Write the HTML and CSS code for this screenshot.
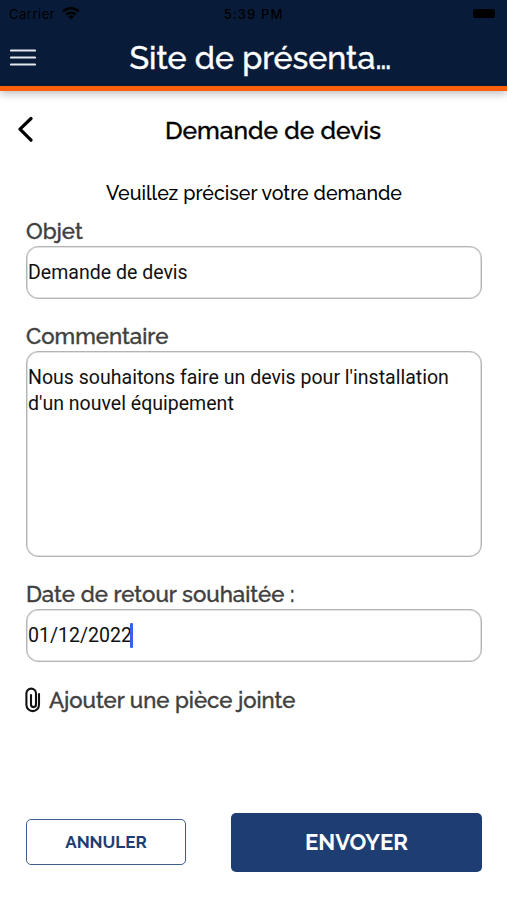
FILE: index.html
```html
<!DOCTYPE html>
<html lang="fr">
<head>
    <meta charset="UTF-8">
    <meta name="viewport" content="width=device-width, initial-scale=1.0">
    <title>Demande de devis</title>
    <link rel="stylesheet" href="styles.css">
</head>
<body>
    <header>
        <!-- Barre d'état -->
        <div class="status-bar">
            <div class="carrier">
                <span class="carrier-name">Carrier</span>
                <svg width="18" height="14" viewBox="0 0 18 14" fill="none" stroke="#000" stroke-width="2.6">
                    <path d="M1.2 5.4a11.2 11.2 0 0 1 15.6 0"/>
                    <path d="M4.2 8.6a7 7 0 0 1 9.6 0"/>
                    <path d="M9 13.2L6.2 10.5a4 4 0 0 1 5.6 0z" fill="#000" stroke="none"/>
                </svg>
            </div>
            <span class="clock">5:39 PM</span>
            <span class="battery"></span>
        </div>
        <!-- Barre de navigation -->
        <div class="nav-bar">
            <svg class="menu-icon" width="26" height="17" viewBox="0 0 26 17" stroke="#e4e8ee" stroke-width="2.2" stroke-linecap="round">
                <path d="M1 1.5h24M1 8.5h24M1 15.5h24"/>
            </svg>
            <h1>Site de présenta…</h1>
        </div>
    </header>
    <main>
        <div class="page-title">
            <svg width="18" height="28" viewBox="0 0 18 28" fill="none" stroke="#000" stroke-width="3.2" stroke-linecap="round" stroke-linejoin="round">
                <path d="M16 2.5L5 13.2l11 11"/>
            </svg>
            <h2>Demande de devis</h2>
        </div>
        <form>
            <p class="intro">Veuillez préciser votre demande</p>

            <label class="label-objet" for="objet">Objet</label>
            <input class="field" type="text" id="objet" value="Demande de devis">

            <label class="label-commentaire" for="commentaire">Commentaire</label>
            <textarea class="field" id="commentaire" spellcheck="false">Nous souhaitons faire un devis pour l'installation d'un nouvel équipement</textarea>

            <label class="label-date">Date de retour souhaitée :</label>
            <div class="field date-field">01/12/2022<span class="caret"></span></div>

            <div class="attachment">
                <svg width="16" height="26" viewBox="0 0 16 26" fill="none" stroke="#111" stroke-width="2.1" stroke-linecap="round">
                    <path d="M14 7v10.8a6.2 6.2 0 0 1-12.6 0V6.4a4.8 4.8 0 0 1 9.6 0v11.2a2.5 2.5 0 0 1-5 0V8"/>
                </svg>
                <span>Ajouter une pièce jointe</span>
            </div>

            <div class="actions">
                <button type="button" class="cancel">ANNULER</button>
                <button type="button" class="send">ENVOYER</button>
            </div>
        </form>
    </main>
</body>
</html>
```
FILE: styles.css
```css
* {
    box-sizing: border-box;
}
body {
    font-family: Raleway, Lato, sans-serif;
    margin: 0;
    height: 900px;
    background-color: #fff;
    overflow: hidden;
}
header {
    height: 91px;
    background-color: #081c39;
    border-bottom: 5px solid #ff5f0a;
    box-shadow: 0 3px 8px rgba(0, 0, 0, 0.25);
}
.status-bar {
    display: grid;
    grid-template-columns: 1fr auto 1fr;
    align-items: center;
    height: 28px;
    padding: 0 12px 0 9px;
    font-family: Inter, sans-serif;
    font-size: 13px;
    color: #000;
}
.carrier {
    display: flex;
    align-items: center;
    gap: 7px;
    padding-bottom: 2px;
}
.carrier-name {
    padding-top: 2px;
    letter-spacing: 0.5px;
}
.clock {
    padding-left: 3px;
    font-weight: 500;
    letter-spacing: 1.1px;
}
.battery {
    justify-self: end;
    width: 22px;
    height: 9px;
    margin-bottom: 2px;
    border-radius: 2px;
    background-color: #000;
}
.nav-bar {
    display: grid;
    grid-template-columns: 36px 1fr 32px;
    align-items: center;
    height: 59px;
    padding-left: 10px;
}
h1, h2, p {
    margin: 0;
}
h1, h2, label, .attachment span {
    -webkit-text-stroke: 0.4px;
}
h1 {
    color: #fff;
    font-size: 32.2px;
    font-weight: 500;
    line-height: 40px;
    text-align: center;
    white-space: nowrap;
}
.page-title {
    display: grid;
    grid-template-columns: 18px 1fr;
    align-items: center;
    height: 78px;
    padding: 0 0 0 15px;
}
h2 {
    padding-left: 6px;
    font-size: 24.6px;
    font-weight: 500;
    text-align: center;
}
form {
    display: flex;
    flex-direction: column;
    padding: 0 25px 0 26px;
}
.intro {
    height: 49px;
    line-height: 49px;
    font-size: 19.6px;
    font-weight: 500;
    text-align: center;
}
label {
    height: 28px;
    line-height: 26px;
    font-size: 22.3px;
    font-weight: 500;
    color: #404040;
}
.label-commentaire {
    margin-top: 24px;
}
.label-date {
    margin-top: 24px;
}
.field {
    width: 456px;
    height: 52.5px;
    margin: 0;
    padding: 0 1px;
    border: 1px solid #b4b4b4;
    border-radius: 12px;
    background-color: #fff;
    box-shadow: inset 0 0 0 0.6px #c8c8c8;
    color: #111;
    font-family: Roboto, sans-serif;
    font-size: 19.55px;
    outline: none;
}
textarea.field {
    height: 206.5px;
    padding: 13px 1px 0;
    line-height: 26px;
    resize: none;
}
.date-field {
    display: flex;
    align-items: center;
}
.caret {
    width: 3px;
    height: 25px;
    margin-left: -2px;
    border-radius: 1px;
    background-color: #3e60e8;
}
.attachment {
    display: flex;
    align-items: center;
    gap: 8px;
    height: 76px;
    margin-left: -1px;
    font-size: 22.2px;
    font-weight: 500;
    color: #404040;
}
.actions {
    display: flex;
    align-items: center;
    justify-content: space-between;
    margin-top: 75px;
}
button {
    padding: 0;
    border-radius: 5px;
    font-family: inherit;
    font-weight: bold;
}
.cancel {
    width: 160px;
    height: 46px;
    border: 1px solid #3d5d8e;
    background-color: #fff;
    color: #1d3d73;
    font-size: 17px;
}
.send {
    width: 251px;
    height: 59px;
    border: none;
    background-color: #1d3d73;
    color: #fff;
    font-size: 22.2px;
}
```
